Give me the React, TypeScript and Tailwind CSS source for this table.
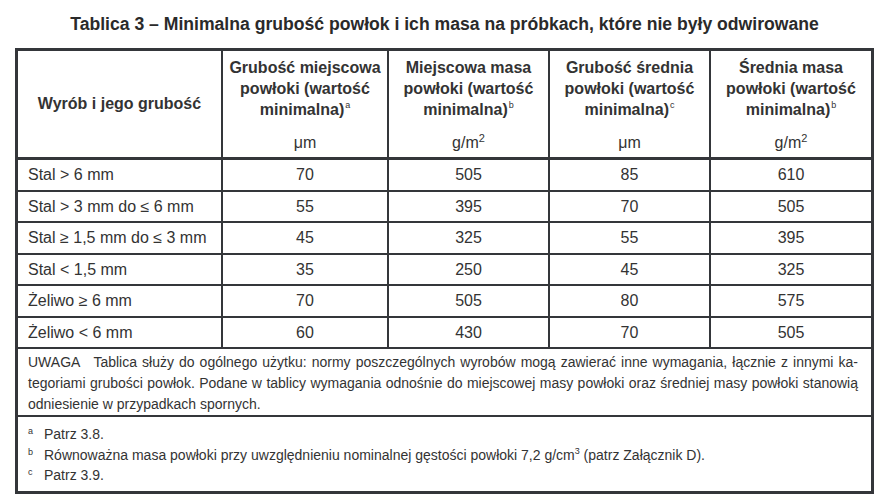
import React from 'react';

const rows = [
  ['Stal > 6 mm', '70', '505', '85', '610'],
  ['Stal > 3 mm do ≤ 6 mm', '55', '395', '70', '505'],
  ['Stal ≥ 1,5 mm do ≤ 3 mm', '45', '325', '55', '395'],
  ['Stal < 1,5 mm', '35', '250', '45', '325'],
  ['Żeliwo ≥ 6 mm', '70', '505', '80', '575'],
  ['Żeliwo < 6 mm', '60', '430', '70', '505'],
];

const headers = [
  { lines: ['Grubość miejscowa', 'powłoki (wartość', 'minimalna)'], note: 'a', unit: 'um' },
  { lines: ['Miejscowa masa', 'powłoki (wartość', 'minimalna)'], note: 'b', unit: 'gm' },
  { lines: ['Grubość średnia', 'powłoki (wartość', 'minimalna)'], note: 'c', unit: 'um' },
  { lines: ['Średnia masa', 'powłoki (wartość', 'minimalna)'], note: 'b', unit: 'gm' },
];

const Unit: React.FC<{ kind: string }> = ({ kind }) =>
  kind === 'um' ? (
    <span>μm</span>
  ) : (
    <span>
      g/m<sup className="text-[11px] -top-[6px]">2</sup>
    </span>
  );

const App: React.FC = () => {
  return (
    <div className="w-[893px] h-[502px] bg-white text-[#333] font-['Liberation_Sans',Arial,sans-serif]">
      <div className="w-[859px] ml-[15px] pt-[12px]">
        <h1 className="text-center font-bold text-[17.6px] leading-[24px] mb-[12px] text-[#2a2a2a]">
          Tablica 3 – Minimalna grubość powłok i ich masa na próbkach, które nie były odwirowane
        </h1>

        <div className="grid grid-cols-[203px_164px_159px_159px_160px] gap-[2px] bg-[#34363a] border-[3px] border-[#34363a]">
          {/* naglowek */}
          <div className="bg-white h-[107px] border-b border-[#34363a] flex items-center justify-center font-bold text-[16px]">
            Wyrób i jego grubość
          </div>
          {headers.map((h, i) => (
            <div
              key={i}
              className="bg-white h-[107px] border-b border-[#34363a] flex flex-col items-center pt-[6px] pb-[4px] text-[16px] leading-[21px]"
            >
              <div className="font-bold text-center">
                {h.lines.map((l, j) => (
                  <div key={j}>
                    {l}
                    {j === 2 && <sup className="text-[9px] font-normal -top-[7px] ml-[1px]">{h.note}</sup>}
                  </div>
                ))}
              </div>
              <div className="mt-auto">
                <Unit kind={h.unit} />
              </div>
            </div>
          ))}

          {/* wiersze */}
          {rows.map((r, i) =>
            r.map((c, j) => (
              <div
                key={`${i}-${j}`}
                className={`bg-white flex items-center text-[16px] ${i % 2 === 0 ? 'h-[30px]' : 'h-[29px]'} ${
                  j === 0 ? 'pl-[10px]' : 'justify-center'
                }`}
              >
                {c}
              </div>
            ))
          )}

          {/* uwaga */}
          <div className="col-span-5 bg-white h-[66px] pt-[3px] pl-[10px] pr-[13px] text-[14px] leading-[21px]">
            <div className="text-justify [text-align-last:justify]">
              UWAGA<span className="inline-block w-[13px]"></span>Tablica służy do ogólnego użytku: normy poszczególnych wyrobów mogą zawierać inne wymagania, łącznie z innymi ka-
            </div>
            <div className="text-justify [text-align-last:justify]">
              tegoriami grubości powłok. Podane w tablicy wymagania odnośnie do miejscowej masy powłoki oraz średniej masy powłoki stanowią
            </div>
            <div>odniesienie w przypadkach spornych.</div>
          </div>

          {/* przypisy */}
          <div className="col-span-5 bg-white h-[74px] pt-[7px] pl-[10px] text-[14px] leading-[20.5px]">
            <div className="flex">
              <span className="w-[16px] text-[9px] leading-[14px]">a</span>
              <span>Patrz 3.8.</span>
            </div>
            <div className="flex">
              <span className="w-[16px] text-[9px] leading-[14px]">b</span>
              <span>
                Równoważna masa powłoki przy uwzględnieniu nominalnej gęstości powłoki 7,2 g/cm
                <sup className="text-[9px] -top-[6px]">3</sup> (patrz Załącznik D).
              </span>
            </div>
            <div className="flex">
              <span className="w-[16px] text-[9px] leading-[14px]">c</span>
              <span>Patrz 3.9.</span>
            </div>
          </div>
        </div>
      </div>
    </div>
  );
};

export default App;
